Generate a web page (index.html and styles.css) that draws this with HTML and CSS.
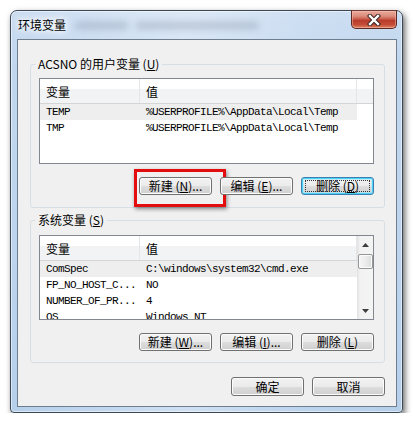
FILE: index.html
```html
<!DOCTYPE html>
<html lang="zh-CN">
<head>
<meta charset="utf-8">
<title>环境变量</title>
<link rel="stylesheet" href="styles.css">
</head>
<body>
<div class="window">
  <div class="titlebar">
    <span class="title">环境变量</span>
    <span class="ghost"><i class="g1"></i><i class="g2"></i></span>
    <button class="close" aria-label="关闭">
      <svg width="14" height="12" viewBox="0 0 14 12">
        <path d="M3 2 L11 10 M11 2 L3 10" stroke="#3b2522" stroke-width="4.4" stroke-linecap="square" fill="none"/>
        <path d="M3 2 L11 10 M11 2 L3 10" stroke="#ffffff" stroke-width="2.4" stroke-linecap="square" fill="none"/>
      </svg>
    </button>
  </div>
  <div class="client">
    <fieldset class="group group-user">
      <legend>ACSNO 的用户变量 (<u>U</u>)</legend>
      <div class="list list-user">
        <div class="cols">
          <div class="head"><span class="c1">变量</span><span class="c2">值</span><span class="c3"></span></div>
          <div class="row sel"><span class="c1">TEMP</span><span class="c2">%USERPROFILE%\AppData\Local\Temp</span></div>
          <div class="row"><span class="c1">TMP</span><span class="c2">%USERPROFILE%\AppData\Local\Temp</span></div>
        </div>
      </div>
      <div class="btns">
        <button class="btn marked">新建 (<u>N</u>)...</button>
        <button class="btn">编辑 (<u>E</u>)...</button>
        <button class="btn focus">删除 (<u>D</u>)</button>
      </div>
    </fieldset>
    <fieldset class="group group-sys">
      <legend>系统变量 (<u>S</u>)</legend>
      <div class="list list-sys">
        <div class="cols">
          <div class="head"><span class="c1">变量</span><span class="c2">值</span></div>
          <div class="row sel"><span class="c1">ComSpec</span><span class="c2">C:\windows\system32\cmd.exe</span></div>
          <div class="row"><span class="c1">FP_NO_HOST_C...</span><span class="c2">NO</span></div>
          <div class="row"><span class="c1">NUMBER_OF_PR...</span><span class="c2">4</span></div>
          <div class="row"><span class="c1">OS</span><span class="c2">Windows_NT</span></div>
        </div>
        <div class="scrollbar">
          <div class="arrow">
            <svg width="7" height="4" viewBox="0 0 7 4"><polygon points="0,4 7,4 3.5,0" fill="#3d3d3d"/></svg>
          </div>
          <div class="thumb"></div>
          <div class="track"></div>
          <div class="arrow">
            <svg width="7" height="4" viewBox="0 0 7 4"><polygon points="0,0 7,0 3.5,4" fill="#3d3d3d"/></svg>
          </div>
        </div>
      </div>
      <div class="btns">
        <button class="btn">新建 (<u>W</u>)...</button>
        <button class="btn">编辑 (<u>I</u>)...</button>
        <button class="btn">删除 (<u>L</u>)</button>
      </div>
    </fieldset>
    <div class="footer">
      <button class="btn big">确定</button>
      <button class="btn big">取消</button>
    </div>
  </div>
</div>
</body>
</html>
```
FILE: styles.css
```css
* { box-sizing: border-box; }

html, body {
  margin: 0;
  background: #ffffff;
}

body {
  font-family: "Noto Sans CJK SC", "Liberation Sans", sans-serif;
  font-size: 12px;
  color: #000;
}

.window {
  margin: 10px 0 0 10px;
  width: 393px;
  height: 403px;
  border: 1px solid #3a4654;
  border-radius: 7px 7px 4px 4px;
  padding: 0 5px 5px 6px;
  background:
    linear-gradient(to right, rgba(255,255,255,0) 0%, rgba(255,255,255,0.35) 45%, rgba(255,255,255,0.1) 75%, rgba(255,255,255,0) 100%),
    linear-gradient(to bottom, #cadcf1 0%, #c1d7ef 12%, #bcd4ee 60%, #b5cfeb 100%);
  box-shadow: inset 0 0 0 1px rgba(255,255,255,0.55), 2px 3px 6px rgba(0,0,0,0.6);
}

.titlebar {
  height: 28px;
  display: flex;
  align-items: flex-start;
}

.title {
  margin: 7px 0 0 1px;
  line-height: 14px;
  font-size: 12px;
  text-shadow: 0 0 5px #fff, 0 0 9px #fff, 0 0 12px #fff;
}

.ghost {
  display: flex;
  gap: 8px;
  margin: 11px 0 0 9px;
}

.ghost i {
  display: block;
  height: 7px;
  background: rgba(80, 92, 115, 0.26);
  filter: blur(3.5px);
  border-radius: 3px;
}

.ghost .g1 { width: 53px; }
.ghost .g2 { width: 123px; }

.close {
  margin: -1px 0 0 auto;
  width: 46px;
  height: 19px;
  padding: 0;
  border: 1px solid #5a2b25;
  border-top-color: #6b3b34;
  border-radius: 0 0 5px 5px;
  background: linear-gradient(to bottom, #e9aa9b 0%, #dc8d7c 30%, #c9594a 48%, #b83c2c 55%, #c44c36 80%, #dc8465 100%);
  box-shadow: inset 0 0 0 1px rgba(255, 200, 190, 0.45);
  display: flex;
  align-items: center;
  justify-content: center;
}

.close svg { display: block; }

.client {
  height: 368px;
  border: 1px solid #6f7e8e;
  background: #f0f0f0;
  padding-top: 17px;
}

.group {
  margin: 0 11px 0 12px;
  width: 355px;
  border: 1px solid #d5dfe5;
  border-radius: 3px;
  padding: 7px 10px 12px 8px;
  min-width: 0;
}

.group-sys {
  margin-top: 5px;
  padding-top: 8px;
  padding-bottom: 11px;
}

.group legend {
  padding: 0 3px;
  margin-left: -4px;
  line-height: 14px;
  font-size: 12px;
}

.list {
  width: 335px;
  border: 1px solid #828790;
  background: #ffffff;
  display: flex;
  font-family: "Liberation Mono", "Noto Sans CJK SC", monospace;
  font-size: 11px;
  letter-spacing: -0.6px;
}

.list-user { height: 86px; }
.list-sys { height: 85px; overflow: hidden; }

.cols {
  flex: 1;
  min-width: 0;
}

.list-sys .cols { flex: 0 0 317px; }

.head {
  display: flex;
  height: 25px;
  border-bottom: 1px solid #d5d5d5;
  background: linear-gradient(to bottom, #ffffff 0, #ffffff 10px, #f2f3f5 10px, #f2f3f5 100%);
  font-family: "Noto Sans CJK SC", sans-serif;
  font-size: 12px;
  letter-spacing: 0;
}

.head span {
  display: flex;
  align-items: center;
  padding-left: 6px;
  border-right: 1px solid #e3e5e8;
}

.head .c1 { width: 100px; }
.head .c2 { width: 217px; }
.head .c3 { flex: 1; border-right: 0; }

.row {
  display: flex;
  width: 317px;
  height: 16px;
  line-height: 16px;
  white-space: nowrap;
}

.row.sel { background: #eeeeee; }

.row span { padding-left: 6px; overflow: hidden; }
.row .c1 { width: 100px; }
.row .c2 { width: 217px; }

.scrollbar {
  width: 16px;
  display: flex;
  flex-direction: column;
  background: linear-gradient(to right, #e6e6e6 0, #f2f2f2 2px, #f4f4f4 100%);
  border-left: 1px solid #e4e4e4;
}

.arrow {
  height: 17px;
  display: flex;
  align-items: center;
  justify-content: center;
}

.thumb {
  margin: 1px 0 0 0;
  height: 15px;
  width: 15px;
  border: 1px solid #979797;
  border-radius: 2px;
  background: linear-gradient(to right, #f6f6f6 0%, #ececec 50%, #dcdcdc 100%);
  box-shadow: inset 0 0 0 1px #fbfbfb;
}

.track { flex: 1; }

.btns {
  display: flex;
  justify-content: flex-end;
  gap: 8px;
  margin-top: 13px;
}

.btn {
  position: relative;
  width: 73px;
  height: 18px;
  padding: 0;
  border: 1px solid #707070;
  border-radius: 3px;
  background: linear-gradient(to bottom, #f2f2f2 0%, #ebebeb 50%, #dddddd 51%, #cfcfcf 100%);
  box-shadow: inset 0 0 0 1px #fcfcfc;
  font-family: "Noto Sans CJK SC", sans-serif;
  font-size: 12px;
  line-height: 16px;
  color: #000;
}

.btn.big { height: 19px; }

.btn.focus {
  border-color: #3c7fb1;
  box-shadow: inset 0 0 0 1px #48d2f8, inset 0 0 0 2px rgba(170, 232, 252, 0.6);
}

.btn.focus::after {
  content: "";
  position: absolute;
  left: 3px;
  right: 3px;
  top: 2px;
  bottom: 2px;
  border: 1px dotted #333;
}

.btn.marked::before {
  content: "";
  position: absolute;
  left: -6px;
  top: -9px;
  width: 86px;
  height: 32px;
  border: 3px solid #e30d0d;
  box-shadow: 1px 2px 4px rgba(0, 0, 0, 0.45);
}

.footer {
  display: flex;
  justify-content: flex-end;
  gap: 8px;
  margin: 14px 11px 0 0;
}
```
